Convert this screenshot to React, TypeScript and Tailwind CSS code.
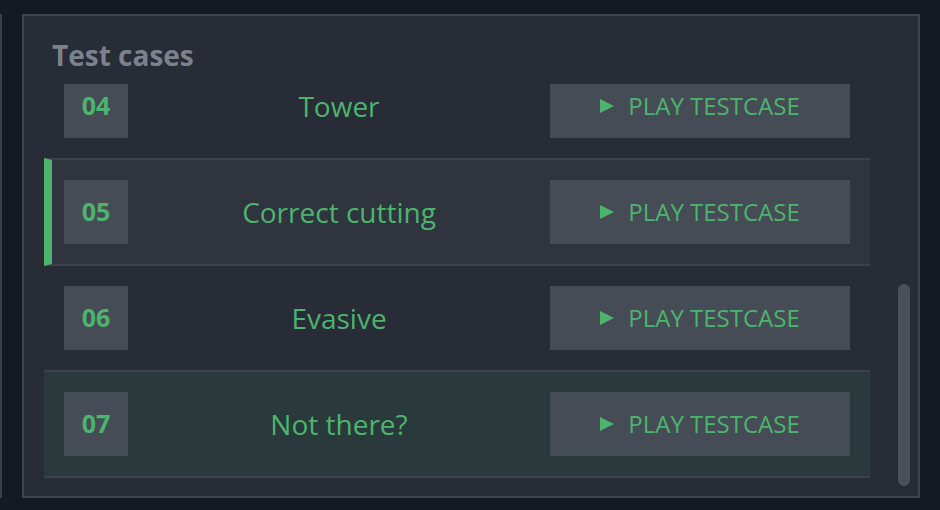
import React from 'react';

type TestCase = { id: string; name: string };

// list is scrolled to the bottom, first visible row is 04
const cases: TestCase[] = [
    { id: '04', name: 'Tower' },
    { id: '05', name: 'Correct cutting' },
    { id: '06', name: 'Evasive' },
    { id: '07', name: 'Not there?' },
];

function PlayButton() {
    return (
        <button className="flex h-16 w-[300px] shrink-0 items-center justify-center gap-[14px] bg-[#464c56] text-[24px] uppercase text-[#4cb46d]">
            <svg width="14" height="14" viewBox="0 0 14 14" className="shrink-0">
                <path d="M0 0 L14 7 L0 14 Z" fill="#4cb46d" />
            </svg>
            <span className="leading-none">Play testcase</span>
        </button>
    );
}

function Row({ tc, selected, hovered }: { tc: TestCase; selected?: boolean; hovered?: boolean }) {
    let cls = 'flex h-[106px] items-center border-b-2 border-[#3c424c] px-5';
    if (selected) cls += ' -mt-[2px] h-[108px] border-t-2 border-l-[8px] border-l-[#4cb46d] bg-[#2f343e] pl-3';
    if (hovered) cls += ' bg-[#2a3a3c]';
    return (
        <div className={cls}>
            {/* number badge */}
            <div className="flex h-16 w-16 shrink-0 items-center justify-center bg-[#464c56] text-[25px] font-bold text-[#4cb46d]">
                {tc.id}
            </div>
            <div className="flex-1 text-center text-[28px] text-[#4cb46d]">{tc.name}</div>
            <PlayButton />
        </div>
    );
}

export default function App() {
    return (
        <div className="flex h-[510px] w-[940px] bg-[#141a23] pt-[14px] pb-[12px] font-['Open_Sans',sans-serif]">
            {/* neighbouring panel edge */}
            <div className="w-[2px] shrink-0 bg-[#3b4048]" />

            <div className="ml-5 flex w-[898px] flex-col border-2 border-[#3e434c] bg-[#272c36]">
                <h2 className="pl-7 pt-[23px] text-[28px] font-bold leading-8 text-[#7c818c]">Test cases</h2>

                <div className="relative mt-[13px] mb-[8px] flex-1 overflow-hidden pl-5">
                    <div className="-mt-[30px] w-[826px]">
                        {cases.map((tc) => (
                            <Row key={tc.id} tc={tc} selected={tc.id === '05'} hovered={tc.id === '07'} />
                        ))}
                    </div>
                    {/* scrollbar thumb */}
                    <div className="absolute right-[8px] bottom-[2px] h-[202px] w-3 rounded-full bg-[#4a505a]" />
                </div>
            </div>
        </div>
    );
}
